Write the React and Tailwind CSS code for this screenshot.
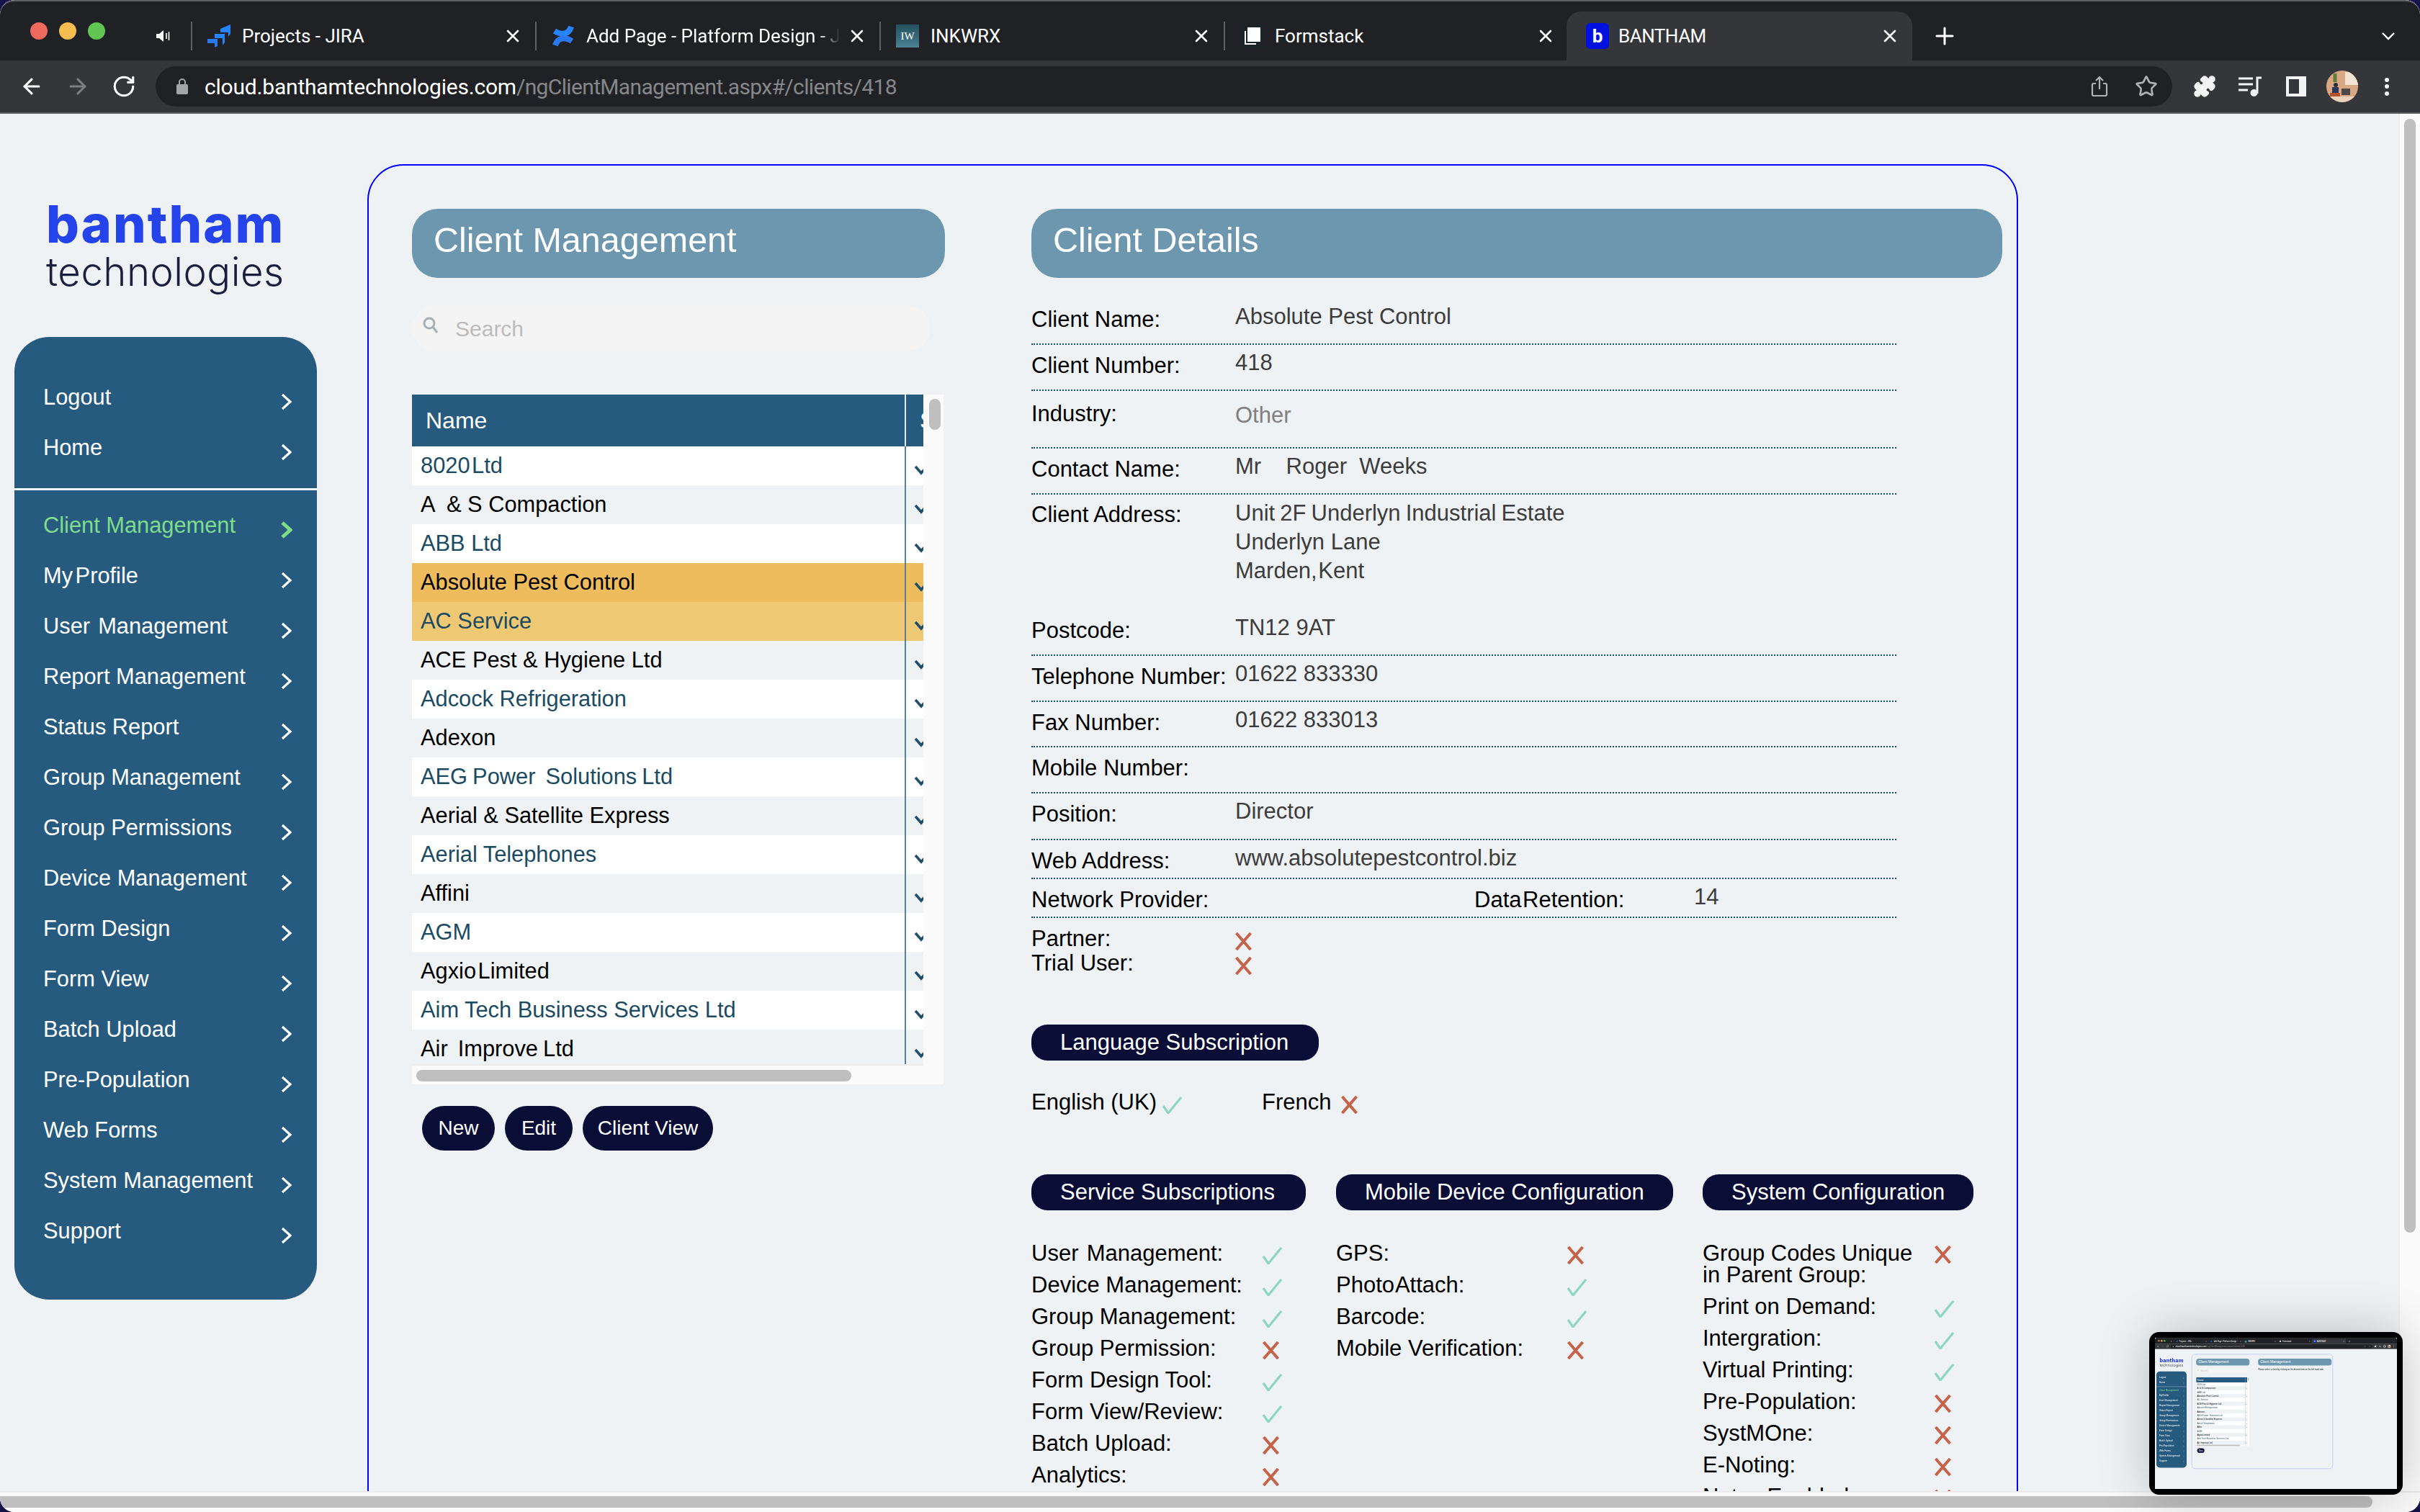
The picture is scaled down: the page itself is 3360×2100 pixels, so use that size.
import React from 'react';
import { ArrowLeft, ArrowRight, RotateCw, Star, Puzzle } from 'lucide-react';

const sans = 'font-["Liberation_Sans",Arial,sans-serif]';

const navTop = ['Logout', 'Home'];
const navMain = [
    'Client Management', 'My Profile', 'User  Management', 'Report Management', 'Status Report',
    'Group Management', 'Group Permissions', 'Device Management', 'Form Design', 'Form View',
    'Batch Upload', 'Pre-Population', 'Web Forms', 'System Management', 'Support',
];
const clients = [
    '8020 Ltd', 'A  & S Compaction', 'ABB Ltd', 'Absolute Pest Control', 'AC Service',
    'ACE Pest & Hygiene Ltd', 'Adcock Refrigeration', 'Adexon', 'AEG Power  Solutions Ltd',
    'Aerial & Satellite Express', 'Aerial Telephones', 'Affini', 'AGM', 'Agxio Limited',
    'Aim Tech Business Services Ltd', 'Air  Improve Ltd',
];
const details = [
    { label: 'Client Name:', value: 'Absolute Pest Control', h: 'h-[64px]' },
    { label: 'Client Number:', value: '418', h: 'h-[64px]' },
    { label: 'Industry:', value: 'Other', h: 'h-[80px]', lp: 'pt-[14px]', vp: 'pt-[16px]', vc: 'text-[#808080]' },
    { label: 'Contact Name:', value: 'Mr    Roger  Weeks', h: 'h-[64px]' },
];
const details2 = [
    { label: 'Telephone Number:', value: '01622 833330', h: 'h-[64px]' },
    { label: 'Fax Number:', value: '01622 833013', h: 'h-[63px]' },
    { label: 'Mobile Number:', value: '', h: 'h-[64px]' },
    { label: 'Position:', value: 'Director', h: 'h-[65px]' },
    { label: 'Web Address:', value: 'www.absolutepestcontrol.biz', h: 'h-[54px]' },
];
const services = [
    ['User  Management:', true], ['Device Management:', true], ['Group Management:', true], ['Group Permission:', false],
    ['Form Design Tool:', true], ['Form View/Review:', true], ['Batch Upload:', false], ['Analytics:', false],
];
const mobile = [['GPS:', false], ['Photo Attach:', true], ['Barcode:', true], ['Mobile Verification:', false]];
const system = [
    ['Print on Demand:', true], ['Intergration:', true], ['Virtual Printing:', true], ['Pre-Population:', false],
    ['SystMOne:', false], ['E-Noting:', false], ['Notes Enabled:', false],
];

const Cross = () => (
    <svg width="25" height="25" viewBox="0 0 25 25" className="shrink-0 mt-[9px]">
        <path d="M2.5 1 L22.5 24 M22.5 1 L2.5 24" stroke="#c66247" strokeWidth="4" fill="none" />
    </svg>
);

const Check = () => (
    <svg width="29" height="24" viewBox="0 0 29 24" className="shrink-0 mt-[10px]">
        <path d="M2 13 L9 23 L27 1" stroke="#8ed7bf" strokeWidth="3.2" fill="none" />
    </svg>
);

const Mark = ({ on }) => (on ? <Check /> : <Cross />);

const CloseX = () => (
    <svg width="18" height="18" viewBox="0 0 18 18" className="shrink-0">
        <path d="M2 2 L16 16 M16 2 L2 16" stroke="#fff" strokeWidth="2.6" strokeLinecap="round" />
    </svg>
);

const JiraIcon = () => (
    <svg width="32" height="32" viewBox="0 0 32 32" className="shrink-0">
        <path d="M18 6 L32 0 V13 L29 17 V11 H18Z" fill="#2684ff" />
        <path d="M10 13 H24 V25 L21 29 V19 H10Z" fill="#2684ff" />
        <path d="M0 20 H14 V30 L10 32 V26 H0Z" fill="#2a78ee" />
    </svg>
);

const ConfluenceIcon = () => (
    <svg width="32" height="32" viewBox="0 0 32 32" className="shrink-0">
        <path d="M27 3 C24 13 15 16 4 9" stroke="#2684ff" strokeWidth="8" fill="none" />
        <path d="M5 29 C8 19 17 16 28 23" stroke="#2a78ee" strokeWidth="8" fill="none" />
    </svg>
);

const InkwrxIcon = () => (
    <div className="w-[32px] h-[32px] shrink-0 bg-gradient-to-b from-[#24505f] to-[#4a8291] flex items-center justify-center text-white text-[15px] leading-none font-['Liberation_Serif',serif]">
        IW
    </div>
);

const FormstackIcon = () => (
    <svg width="32" height="32" viewBox="0 0 32 32" className="shrink-0">
        <rect width="32" height="32" fill="#1c2327" />
        <rect x="10" y="4" width="18" height="20" fill="#fff" />
        <path d="M7 9 V27 H22" stroke="#fff" strokeWidth="2" fill="none" />
    </svg>
);

const Tab = ({ icon, title, fade }) => (
    <div className="w-[478px] h-[40px] flex items-center shrink-0">
        <div className="w-[2px] h-[40px] bg-[#5f6064] shrink-0" />
        <div className="ml-[21px]">{icon}</div>
        <div className={`ml-[16px] w-[352px] overflow-hidden whitespace-nowrap text-[26px] text-white ${fade ? '[mask-image:linear-gradient(to_right,#000_92%,transparent)]' : ''}`}>
            {title}
        </div>
        <div className="ml-[15px]"><CloseX /></div>
    </div>
);

const Avatar = () => (
    <svg width="44" height="44" viewBox="0 0 44 44" className="shrink-0">
        <defs>
            <clipPath id="avatarClip"><circle cx="22" cy="22" r="22" /></clipPath>
        </defs>
        <g clipPath="url(#avatarClip)">
            <rect width="44" height="44" fill="#d9a883" />
            <rect x="26" y="2" width="18" height="18" fill="#f2e3d2" />
            <rect x="0" y="36" width="44" height="8" fill="#e9d2bc" />
            <path d="M12 4 V16" stroke="#5f7d3c" strokeWidth="5" />
            <circle cx="13" cy="20" r="3" fill="#2b2f3a" />
            <rect x="8" y="23" width="9" height="10" fill="#27395a" />
            <rect x="5" y="31" width="14" height="5" fill="#b8512a" />
            <rect x="21" y="25" width="12" height="9" fill="#4a4a4a" />
        </g>
    </svg>
);

const Chrome = () => (
    <div className="shrink-0 font-['Roboto',sans-serif]">
        <div className="h-[84px] bg-[#202124] border-t-2 border-[#5d5e62] rounded-t-[20px] flex items-center relative">
            <div className="flex items-center gap-[16px] ml-[42px] w-[174px] shrink-0">
                <div className="w-[24px] h-[24px] rounded-full bg-[#ee6a5f]" />
                <div className="w-[24px] h-[24px] rounded-full bg-[#f5bd4f]" />
                <div className="w-[24px] h-[24px] rounded-full bg-[#61c554]" />
            </div>
            <svg width="20" height="20" viewBox="0 0 20 20" className="shrink-0 mt-[14px]">
                <path d="M1 7 H5 L11 2 V18 L5 13 H1Z" fill="#fff" />
                <path d="M15 6 V14 M18.5 4 V16" stroke="#fff" strokeWidth="1.6" />
            </svg>
            <div className="ml-[29px] flex items-center mt-[14px]">
                <Tab icon={<JiraIcon />} title="Projects - JIRA" />
                <Tab icon={<ConfluenceIcon />} title="Add Page - Platform Design - Jira" fade />
                <Tab icon={<InkwrxIcon />} title="INKWRX" />
                <Tab icon={<FormstackIcon />} title="Formstack" />
            </div>
            <div className="self-end -ml-[2px] w-[480px] h-[68px] bg-[#35363a] rounded-t-[20px] flex items-center pl-[27px] shrink-0">
                <div className="w-[32px] h-[36px] rounded-[6px] bg-[#0011e0] flex items-center justify-center text-white text-[26px] font-bold leading-none">b</div>
                <div className="ml-[13px] w-[368px] text-[26px] tracking-[-0.5px] text-white">BANTHAM</div>
                <CloseX />
            </div>
            <svg width="26" height="26" viewBox="0 0 26 26" className="ml-[32px] shrink-0 mt-[14px]">
                <path d="M13 2 V24 M2 13 H24" stroke="#fff" strokeWidth="3" strokeLinecap="round" />
            </svg>
            <svg width="20" height="12" viewBox="0 0 20 12" className="absolute left-[3306px] top-[42px]">
                <path d="M2 2 L10 10 L18 2" stroke="#fff" strokeWidth="2.4" fill="none" />
            </svg>
        </div>
        <div className="h-[74px] bg-[#35363a] border-b-2 border-[#5d5e62] flex items-center">
            <ArrowLeft size={34} color="#fff" strokeWidth={2.2} className="ml-[27px]" />
            <ArrowRight size={34} color="#7d7e81" strokeWidth={2.2} className="ml-[30px]" />
            <RotateCw size={34} color="#fff" strokeWidth={2.2} className="ml-[30px]" />
            <div className="ml-[27px] w-[2800px] h-[56px] rounded-full bg-[#202124] flex items-center">
                <svg width="16" height="22" viewBox="0 0 16 22" className="ml-[29px] shrink-0">
                    <rect y="8" width="16" height="14" rx="2" fill="#a3a5a8" />
                    <path d="M4 8 V5 A4 4 0 0 1 12 5 V8" stroke="#a3a5a8" strokeWidth="2" fill="none" />
                </svg>
                <div className="ml-[23px] text-[30px] tracking-[-0.2px] text-white whitespace-nowrap">
                    cloud.banthamtechnologies.com<span className="text-[#86878a] tracking-[-0.65px]">/ngClientManagement.aspx#/clients/418</span>
                </div>
                <svg width="24" height="30" viewBox="0 0 24 30" className="ml-auto shrink-0">
                    <path d="M7 11 H4 Q2 11 2 13 V26 Q2 28 4 28 H20 Q22 28 22 26 V13 Q22 11 20 11 H17 M12 19 V2 M7 7 L12 2 L17 7" stroke="#b0b1b3" strokeWidth="2.2" fill="none" />
                </svg>
                <Star size={32} color="#b0b1b3" strokeWidth={2} className="ml-[37px] mr-[20px]" />
            </div>
            <Puzzle size={32} color="#f4f4f4" fill="#f4f4f4" className="ml-[29px]" />
            <svg width="32" height="28" viewBox="0 0 32 28" className="ml-[31px] shrink-0">
                <path d="M0 3 H20 M0 11 H20 M0 19 H13" stroke="#f4f4f4" strokeWidth="3" />
                <path d="M26 24 V2 H32" stroke="#f4f4f4" strokeWidth="3" fill="none" />
                <circle cx="21.5" cy="23" r="5" fill="#f4f4f4" />
            </svg>
            <div className="ml-[34px] w-[28px] h-[28px] bg-[#f4f4f4] pl-[4px] py-[4px] shrink-0">
                <div className="w-[14px] h-[20px] bg-[#35363a]" />
            </div>
            <div className="ml-[28px]"><Avatar /></div>
            <div className="ml-[37px] flex flex-col gap-[3.5px]">
                <div className="w-[6px] h-[6px] rounded-full bg-[#f4f4f4]" />
                <div className="w-[6px] h-[6px] rounded-full bg-[#f4f4f4]" />
                <div className="w-[6px] h-[6px] rounded-full bg-[#f4f4f4]" />
            </div>
        </div>
    </div>
);

const NavRow = ({ name, active }) => {
    let spacing = '';
    if (name === 'My Profile') spacing = '[word-spacing:-5px]';
    if (name === 'User  Management') spacing = '[word-spacing:-3px]';
    return (
        <div className={`h-[70px] flex items-center pl-[40px] text-[30.8px] ${active ? 'text-[#7fdc8b]' : 'text-white'}`}>
            <span className={`w-[330px] whitespace-pre ${spacing}`}>{name}</span>
            <svg width="16" height="24" viewBox="0 0 16 24" className="mt-[12px]">
                <path d="M2 2 L13 12 L2 22" stroke={active ? '#7fdc8b' : '#fff'} strokeWidth={active ? 5 : 3.2} fill="none" />
            </svg>
        </div>
    );
};

const Sidebar = () => (
    <div className="w-[510px] shrink-0 pl-[20px]">
        <div className="pt-[117px] pl-[44px] h-[310px] font-['Inter',sans-serif]">
            <div className="text-[72px] leading-[72px] font-extrabold tracking-[2px] text-[#2443ea]">bantham</div>
            <div className="text-[54.5px] leading-[60px] font-light text-[#1a1f3f] tracking-[0.5px]">technologies</div>
        </div>
        <div className={`w-[420px] h-[1337px] rounded-[48px] bg-[#265b7f] pt-[49px] ${sans}`}>
            {navTop.map((n) => <NavRow key={n} name={n} />)}
            <div className="h-[3px] bg-[#f2f5f7] mt-[21px] mb-[14px]" />
            {navMain.map((n, i) => <NavRow key={n} name={n} active={i === 0} />)}
        </div>
    </div>
);

const ClientRow = ({ name, index, highlight }) => {
    const isOdd = index % 2 === 1;
    let bg = isOdd ? 'bg-[#eef2f5]' : 'bg-white';
    if (highlight === 'selected') bg = 'bg-[#eebc5c]';
    if (highlight === 'next') bg = 'bg-[#eec873]';
    const color = isOdd ? 'text-black' : 'text-[#1b4a63]';
    let spacing = '';
    if (name === '8020 Ltd' || name === 'Agxio Limited') spacing = '[word-spacing:-6px]';
    if (name === 'AEG Power  Solutions Ltd' || name === 'Air  Improve Ltd') spacing = '[word-spacing:-1.5px]';
    return (
        <div className={`h-[54px] flex shrink-0 ${bg}`}>
            <div className={`w-[684px] pl-[12px] flex items-center text-[30.8px] whitespace-pre ${color} ${spacing}`}>{name}</div>
            <div className="w-[2px] bg-[#5c8094]" />
            <div className="w-[24px] overflow-hidden pl-[11px] pt-[26px]">
                <svg width="20" height="14" viewBox="0 0 20 14" className="max-w-none">
                    <path d="M2 2 L10 11 L18 2" stroke="#1f4e6b" strokeWidth="3.6" fill="none" />
                </svg>
            </div>
        </div>
    );
};

const ClientList = ({ mini }) => (
    <div className="w-[740px] shrink-0">
        <div className="h-[96px] rounded-[36px] bg-[#6d97ae] flex items-center pl-[30px] text-[48.5px] text-white pb-[9px]">Client Management</div>
        <div className="mt-[39px] w-[719px] h-[62px] rounded-full bg-[#f4f4f4] flex items-center">
            <svg width="22" height="24" viewBox="0 0 22 24" className="ml-[15px] -mt-[8px] shrink-0">
                <circle cx="9" cy="9" r="7" stroke="#a5b0b6" strokeWidth="3" fill="none" />
                <path d="M14 14 L20 22" stroke="#a5b0b6" strokeWidth="3" />
            </svg>
            <span className="ml-[23px] text-[30px] text-[#bcbcbc]">Search</span>
        </div>
        <div className="mt-[61px] w-[738px] bg-[#fafafa] relative">
            <div className="w-[710px] h-[930px] overflow-hidden flex flex-col">
                <div className="h-[72px] shrink-0 flex bg-[#265b7f] text-white text-[32px]">
                    <div className="w-[684px] pl-[19px] flex items-center">Name</div>
                    <div className="w-[2px] bg-[#dfe8ee]" />
                    <div className="w-[24px] overflow-hidden pl-[19px] flex items-center">Status</div>
                </div>
                {clients.map((c, i) => (
                    <ClientRow key={c} name={c} index={i} highlight={mini ? null : i === 3 ? 'selected' : i === 4 ? 'next' : null} />
                ))}
            </div>
            <div className="h-[2px] w-[710px] bg-[#ececec]" />
            <div className="h-[26px] pt-[6px] pl-[6px]">
                <div className="w-[604px] h-[16px] rounded-full bg-[#bfbfbf]" />
            </div>
            <div className="absolute right-[4px] top-[6px] w-[16px] h-[43px] rounded-full bg-[#bfbfbf]" />
        </div>
        <div className="mt-[30px] ml-[14px] flex gap-[14px] text-[28px] text-white">
            <div className="w-[101px] h-[62px] rounded-[31px] bg-[#0a0e36] flex items-center justify-center">New</div>
            {!mini && <div className="w-[94px] h-[62px] rounded-[31px] bg-[#0a0e36] flex items-center justify-center">Edit</div>}
            {!mini && <div className="w-[181px] h-[62px] rounded-[31px] bg-[#0a0e36] flex items-center justify-center">Client View</div>}
        </div>
    </div>
);

const DetailRow = ({ label, value, h, lp = 'pt-[11px]', vp = 'pt-[7px]', vc = 'text-[#3c3c3c]' }) => (
    <div className={`w-[1201px] ${h} border-b-2 border-dotted border-[#1a4a63] flex`}>
        <div className={`w-[283px] shrink-0 ${lp}`}>{label}</div>
        <div className={`${vp} ${vc} whitespace-pre`}>{value}</div>
    </div>
);

const Pill = ({ w, children }) => (
    <div className={`${w} h-[50px] rounded-[22px] bg-[#0a0e36] text-white flex items-center pl-[40px] whitespace-nowrap`}>{children}</div>
);

const FeatureRow = ({ name, on, labelW = 'w-[320px]' }) => (
    <div className="h-[44px] flex items-start">
        <div className={`${labelW} pt-[4px] whitespace-pre shrink-0 ${name === 'Photo Attach:' ? '[word-spacing:-6px]' : ''} ${name === 'User  Management:' ? '[word-spacing:-3px]' : ''}`}>{name}</div>
        <div className="mt-[3px]"><Mark on={on} /></div>
    </div>
);

const ClientDetails = () => (
    <div className="w-[1348px] shrink-0">
        <div className="h-[96px] rounded-[36px] bg-[#6d97ae] flex items-center pl-[30px] text-[48.5px] text-white pb-[9px]">Client Details</div>
        <div className="mt-[29px] text-[31px] leading-[36px] text-black">
            {details.map((d) => <DetailRow key={d.label} {...d} />)}
            <div className="w-[1201px] flex h-[153px]">
                <div className="w-[283px] pt-[10px] shrink-0">Client Address:</div>
                <div className="pt-[6px] text-[#3c3c3c] leading-[40px]">
                    <div className="[word-spacing:-1.5px]">Unit 2F Underlyn Industrial Estate</div>
                    <div>Underlyn Lane</div>
                    <div className="[word-spacing:-7px]">Marden, Kent</div>
                </div>
            </div>
            <DetailRow label="Postcode:" value="TN12 9AT" h="h-[71px]" lp="pt-[18px]" vp="pt-[14px]" />
            {details2.map((d) => <DetailRow key={d.label} {...d} />)}
            <div className="w-[1201px] h-[54px] border-b-2 border-dotted border-[#1a4a63] flex">
                <div className="w-[615px] pt-[11px] shrink-0">Network Provider:</div>
                <div className="w-[305px] pt-[11px] shrink-0 [word-spacing:-7px]">Data Retention:</div>
                <div className="pt-[7px] text-[#3c3c3c]">14</div>
            </div>
            <div className="mt-[11px] h-[34px] flex">
                <div className="w-[282px]">Partner:</div>
                <Cross />
            </div>
            <div className="h-[34px] flex">
                <div className="w-[282px]">Trial User:</div>
                <Cross />
            </div>
            <div className="mt-[69px]"><Pill w="w-[399px]">Language Subscription</Pill></div>
            <div className="mt-[40px] h-[36px] flex">
                <span>English (UK)</span>
                <div className="ml-[7px]"><Check /></div>
                <span className="ml-[110px]">French</span>
                <div className="ml-[13px]"><Cross /></div>
            </div>
            <div className="mt-[82px] flex">
                <div className="w-[423px] shrink-0">
                    <Pill w="w-[381px]">Service Subscriptions</Pill>
                    <div className="mt-[38px]">
                        {services.map(([n, on]) => <FeatureRow key={n} name={n} on={on} />)}
                    </div>
                </div>
                <div className="w-[509px] shrink-0">
                    <Pill w="w-[468px]">Mobile Device Configuration</Pill>
                    <div className="mt-[38px]">
                        {mobile.map(([n, on]) => <FeatureRow key={n} name={n} on={on} />)}
                    </div>
                </div>
                <div className="w-[400px] shrink-0">
                    <Pill w="w-[376px]">System Configuration</Pill>
                    <div className="mt-[38px]">
                        <div className="h-[74px] flex items-start pt-[7px] leading-[30px]">
                            <div className="w-[321px] shrink-0">Group Codes Unique<br />in Parent Group:</div>
                            <div className="-mt-[5px]"><Cross /></div>
                        </div>
                        {system.map(([n, on]) => <FeatureRow key={n} name={n} on={on} labelW="w-[321px]" />)}
                    </div>
                </div>
            </div>
        </div>
    </div>
);

const PageContent = ({ mini }) => (
    <div className={`flex-1 min-w-0 flex overflow-hidden bg-[#eef2f5] ${sans}`}>
        <Sidebar />
        <div className={`mt-[70px] shrink-0 border-[2.5px] border-[#0000ff] rounded-[50px] pt-[60px] pl-[60px] flex gap-[120px] ${mini ? 'w-[1960px] h-[1590px] border-[#3344ff]' : 'w-[2292px] h-[2400px]'}`}>
            <ClientList mini={mini} />
            {mini ? (
                <div className="w-[1020px] shrink-0">
                    <div className="h-[96px] rounded-[36px] bg-[#6d97ae] flex items-center pl-[30px] text-[48.5px] text-white pb-[9px]">Client Management</div>
                    <div className="mt-[38px] text-[28px] text-black whitespace-nowrap">Please select a client by clicking on the desired item on the left hand side.</div>
                </div>
            ) : (
                <ClientDetails />
            )}
        </div>
    </div>
);

const Browser = ({ mini }) => (
    <div className="w-[3360px] h-[2100px] flex flex-col rounded-[20px] overflow-hidden bg-[#eef2f5]">
        <Chrome />
        {mini ? (
            <PageContent mini />
        ) : (
            <>
                <div className="flex-1 min-h-0 flex">
                    <PageContent />
                    <div className="w-[30px] shrink-0 bg-[#fafafa] border-l-2 border-[#ececec] pl-[6px] pt-[7px]">
                        <div className="w-[16px] h-[1547px] rounded-full bg-[#bfbfbf]" />
                    </div>
                </div>
                <div className="h-[29px] shrink-0 bg-[#fafafa] border-t-2 border-[#ececec] pt-[5px]">
                    <div className="w-[3294px] h-[16px] rounded-r-full bg-[#bfbfbf]" />
                </div>
            </>
        )}
    </div>
);

export default function App() {
    return (
        <div className="relative w-[3360px] h-[2100px] overflow-hidden bg-[#15124a]">
            <Browser />
            {/* macOS screenshot preview in the corner */}
            <div className="absolute left-[2984px] top-[1850px] w-[352px] h-[226px] p-[8px] rounded-[14px] bg-black shadow-[0_0_70px_rgba(0,0,0,0.22)]">
                <div className="w-[336px] h-[210px] overflow-hidden blur-[0.4px] bg-[#eef2f5]">
                    <div className="w-[3360px] h-[2100px] origin-top-left scale-[0.1]">
                        <Browser mini />
                    </div>
                </div>
            </div>
        </div>
    );
}
